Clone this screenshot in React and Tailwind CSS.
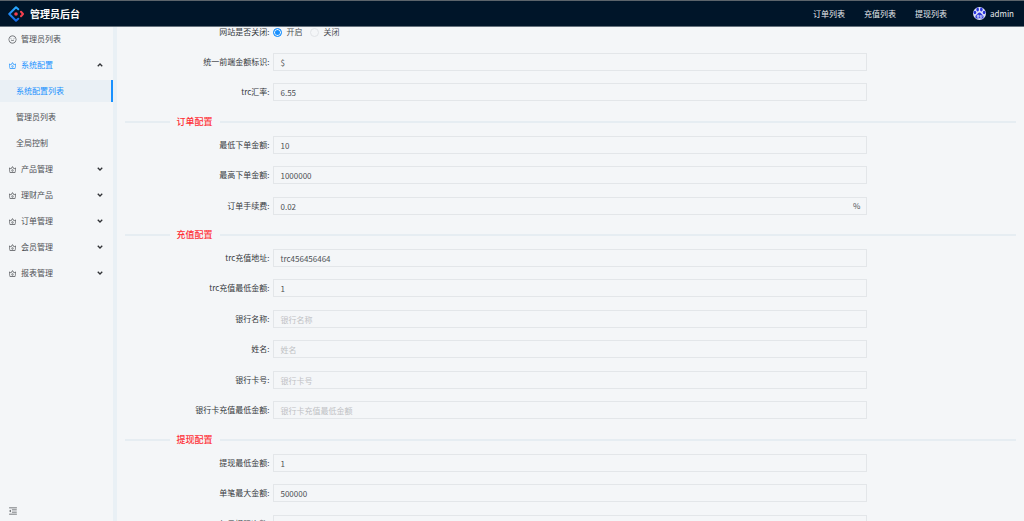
import React, { useState } from 'react';
import { AiOutlineSmile, AiOutlineCrown, AiOutlineMenuFold } from 'react-icons/ai';

const navLinks = ['订单列表', '充值列表', '提现列表'];

const systemItems = ['系统配置列表', '管理员列表', '全局控制'];

const closedMenus = ['产品管理', '理财产品', '订单管理', '会员管理', '报表管理'];

const siteFields = [
  { id: 'currency', label: '统一前端金额标识', value: '$' },
  { id: 'trcRate', label: 'trc汇率', value: '6.55' },
];

const sections = [
  {
    title: '订单配置',
    fields: [
      { id: 'orderMin', label: '最低下单金额', value: '10' },
      { id: 'orderMax', label: '最高下单金额', value: '1000000' },
      { id: 'orderFee', label: '订单手续费', value: '0.02', suffix: '%' },
    ],
  },
  {
    title: '充值配置',
    fields: [
      { id: 'trcAddress', label: 'trc充值地址', value: 'trc456456464' },
      { id: 'trcMin', label: 'trc充值最低金额', value: '1' },
      { id: 'bankName', label: '银行名称', value: '' },
      { id: 'realName', label: '姓名', value: '' },
      { id: 'bankCard', label: '银行卡号', value: '' },
      { id: 'bankMin', label: '银行卡充值最低金额', value: '' },
    ],
  },
  {
    title: '提现配置',
    fields: [
      { id: 'withdrawMin', label: '提现最低金额', value: '1' },
      { id: 'withdrawMax', label: '单笔最大金额', value: '500000' },
      { id: 'withdrawTimes', label: '每日提现次数', value: '10' },
    ],
  },
];

function Logo() {
  return (
    <svg viewBox="0 0 32 32" className="w-4 h-4 shrink-0" fill="none" strokeLinecap="round" strokeLinejoin="round">
      <defs>
        <linearGradient id="logoBlue" x1="0" y1="0" x2="0" y2="1">
          <stop offset="0" stopColor="#29a9ff" />
          <stop offset="1" stopColor="#1668e8" />
        </linearGradient>
      </defs>
      <path d="M20.5 6.5 L16 2.5 L2.5 16 L16 29.5 L20.5 25.5" stroke="url(#logoBlue)" strokeWidth="4" />
      <path d="M26 11.5 L30 16 L26 20.5" stroke="#f5414f" strokeWidth="4" />
      <circle cx="16" cy="16" r="3.6" fill="#f5414f" />
    </svg>
  );
}

function Avatar() {
  return (
    <svg viewBox="0 0 26 26" className="w-[13px] h-[13px] shrink-0">
      <circle cx="13" cy="13" r="13" fill="#dfe3fa" />
      <g fill="#2a35dc">
        <ellipse cx="9.3" cy="5" rx="2.6" ry="3.8" />
        <ellipse cx="16.7" cy="5" rx="2.6" ry="3.8" />
        <ellipse cx="3.8" cy="11" rx="2.7" ry="3.6" />
        <ellipse cx="22.2" cy="11" rx="2.7" ry="3.6" />
        <path d="M13 11 C16 11 17 14 19.5 16 C23 19.5 20.5 24 16.5 23 C14 22.4 12 22.4 9.5 23 C5.5 24 3 19.5 6.5 16 C9 14 10 11 13 11Z" />
      </g>
      <path d="M8.5 16.5 h3 v4 h-3 z M14.5 16 v4.5 h3.4 v-4.5" fill="none" stroke="#dfe3fa" strokeWidth="1.8" />
    </svg>
  );
}

function Arrow({ open }) {
  return (
    <svg viewBox="0 0 12 8" className={`w-[6px] h-1 ml-auto mr-[10px] ${open ? 'rotate-180' : ''}`} fill="none">
      <path d="M1.5 1.5 L6 6 L10.5 1.5" stroke="#303236" strokeWidth="2.6" />
    </svg>
  );
}

function Sidebar() {
  const [active, setActive] = useState('系统配置列表');

  return (
    <aside className="w-[113px] shrink-0 flex flex-col pt-px text-[#4d5054]">
      <nav className="flex flex-col gap-1">
        <button type="button" className="h-[22px] pl-2 flex items-center gap-1">
          <AiOutlineSmile size={9} />管理员列表
        </button>
        <button type="button" className="h-[22px] pl-2 flex items-center gap-1 text-[#1890ff]">
          <AiOutlineCrown size={9} />系统配置<Arrow open />
        </button>
        {systemItems.map(name => (
          <button
            key={name}
            type="button"
            onClick={() => setActive(name)}
            className={`h-[22px] pl-4 text-left ${active === name ? 'bg-[#eaf0f5] text-[#1890ff] border-r-2 border-[#1890ff]' : ''}`}
          >
            {name}
          </button>
        ))}
        {closedMenus.map(name => (
          <button key={name} type="button" className="h-[22px] pl-2 flex items-center gap-1">
            <AiOutlineCrown size={9} />{name}<Arrow />
          </button>
        ))}
      </nav>
      <button type="button" aria-label="收起菜单" className="mt-auto mb-[5px] ml-2 self-start">
        <AiOutlineMenuFold size={10} />
      </button>
    </aside>
  );
}

function Field({ field }) {
  return (
    <div className="flex items-center h-[18px] mb-3 odd:mb-[13px]">
      <label htmlFor={field.id} className="w-1/6 pr-1 text-right text-[#35383c] whitespace-nowrap">{field.label}:</label>
      <div className="w-2/3 h-full flex items-center border border-[#e3e6e9] px-[6px]">
        <input
          id={field.id}
          defaultValue={field.value}
          placeholder={field.label}
          className="flex-1 min-w-0 h-full bg-transparent outline-none text-[#4d5054] placeholder:text-[#bfc1c4]"
        />
        {field.suffix && <span>{field.suffix}</span>}
      </div>
    </div>
  );
}

function Divider({ title }) {
  return (
    <div className="flex items-center h-4 mb-[6px]">
      <span className="w-[5%] h-[2px] bg-[#e6edf2]" />
      <h2 className="px-[7px] text-[9px] font-medium text-[#ff3036]">{title}</h2>
      <span className="flex-1 h-[2px] bg-[#e6edf2]" />
    </div>
  );
}

function RadioOption({ value, label, checked, onChange }) {
  return (
    <label className="flex items-center gap-1">
      <input
        type="radio"
        name="siteOpen"
        value={value}
        checked={checked}
        onChange={onChange}
        className="appearance-none w-[9px] h-[9px] rounded-full border border-[#e1e4e7] checked:border-[#1890ff] checked:bg-[#1890ff] checked:shadow-[inset_0_0_0_1px_#f4f6f8]"
      />
      {label}
    </label>
  );
}

export default function App() {
  const [siteOpen, setSiteOpen] = useState('1');

  return (
    <div className="h-screen flex flex-col overflow-hidden bg-[#f4f6f8] text-[8px] leading-3 text-[#4d5054] font-['Noto_Sans_CJK_SC',sans-serif]">
      <header className="h-[27px] shrink-0 flex items-center pl-2 pr-[10px] bg-[#001529] border-t border-t-[#5c646b] border-b border-b-[#66727d] text-[#e6e9ec]">
        <Logo />
        <h1 className="ml-[6px] text-[10px] font-bold text-white">管理员后台</h1>
        <nav className="ml-auto flex gap-[19px]">
          {navLinks.map(name => <a key={name} href="#">{name}</a>)}
        </nav>
        <button type="button" className="ml-[26px] flex items-center gap-1">
          <Avatar />admin
        </button>
      </header>

      <div className="flex flex-1 min-h-0">
        <Sidebar />
        <main className="flex-1 min-w-0 overflow-hidden px-2 border-l-4 border-[#e9f0f5]">
          <form>
            <fieldset className="flex items-center h-[10px] mb-4">
              <span className="w-1/6 pr-1 text-right text-[#35383c]">网站是否关闭:</span>
              <div className="flex gap-2">
                <RadioOption value="1" label="开启" checked={siteOpen === '1'} onChange={() => setSiteOpen('1')} />
                <RadioOption value="0" label="关闭" checked={siteOpen === '0'} onChange={() => setSiteOpen('0')} />
              </div>
            </fieldset>
            {siteFields.map(f => <Field key={f.id} field={f} />)}

            {sections.map(s => (
              <section key={s.title}>
                <Divider title={s.title} />
                {s.fields.map(f => <Field key={f.id} field={f} />)}
              </section>
            ))}
          </form>
        </main>
      </div>
    </div>
  );
}
